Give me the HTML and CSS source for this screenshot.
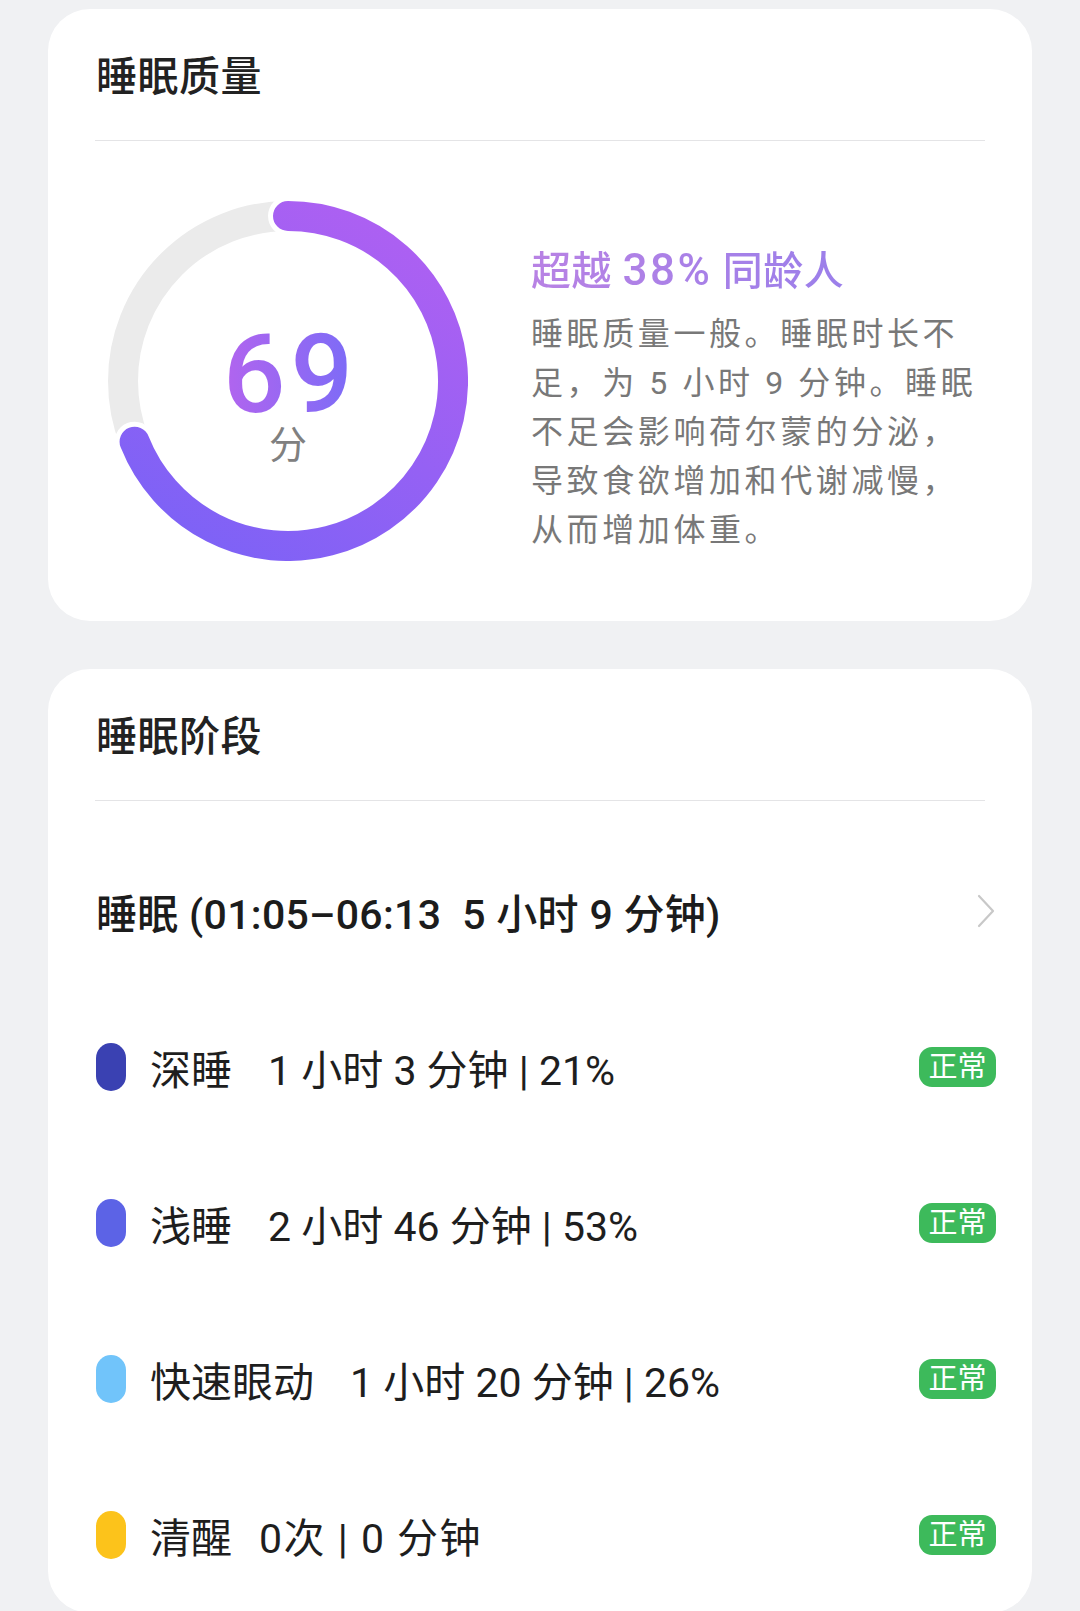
FILE: index.html
```html
<!DOCTYPE html>
<html lang="zh-CN">
<head>
<meta charset="utf-8">
<title>睡眠</title>
<link rel="stylesheet" href="styles.css">
</head>
<body>
<div class="page">
  <section class="card">
    <header class="card-head"><h2 class="card-title">睡眠质量</h2></header>
    <div class="quality">
      <div class="ring">
        <svg class="ring-svg" width="360" height="360" viewBox="0 0 360 360">
          <defs>
            <linearGradient id="arcGrad" gradientUnits="userSpaceOnUse" x1="260" y1="10" x2="60" y2="330">
              <stop offset="0" stop-color="#ad60f2"/>
              <stop offset="1" stop-color="#7d62f6"/>
            </linearGradient>
          </defs>
          <circle cx="180" cy="180" r="165" fill="none" stroke="#ebebeb" stroke-width="30"/>
          <path d="M180 15 A165 165 0 1 1 26.6 240.7" fill="none" stroke="#ffffff" stroke-width="40" stroke-linecap="round"/>
          <path d="M180 15 A165 165 0 1 1 26.6 240.7" fill="none" stroke="url(#arcGrad)" stroke-width="30" stroke-linecap="round"/>
        </svg>
        <div class="score">
          <span class="score-num">69</span>
          <span class="score-unit">分</span>
        </div>
      </div>
      <div class="quality-text">
        <div class="beat">超越 <span class="beat-num">38%</span> 同龄人</div>
        <p class="desc">睡眠质量一般。睡眠时长不<br>足，为 5 小时 9 分钟。睡眠<br>不足会影响荷尔蒙的分泌，<br>导致食欲增加和代谢减慢，<br>从而增加体重。</p>
      </div>
    </div>
  </section>

  <section class="card">
    <header class="card-head"><h2 class="card-title">睡眠阶段</h2></header>
    <div class="stages">
      <div class="row session">
        <span class="session-text">睡眠 (01:05–06:13  5 小时 9 分钟)</span>
        <svg class="chevron" width="20" height="34" viewBox="0 0 20 34"><polyline points="3,2 17,17 3,32" fill="none" stroke="#c8c8c8" stroke-width="2.2" stroke-linecap="round" stroke-linejoin="round"/></svg>
      </div>
      <div class="row stage">
        <span class="pill deep"></span>
        <span class="label">深睡</span>
        <span class="value">1 小时 3 分钟 | 21%</span>
        <span class="badge">正常</span>
      </div>
      <div class="row stage">
        <span class="pill light"></span>
        <span class="label">浅睡</span>
        <span class="value">2 小时 46 分钟 | 53%</span>
        <span class="badge">正常</span>
      </div>
      <div class="row stage">
        <span class="pill rem"></span>
        <span class="label">快速眼动</span>
        <span class="value">1 小时 20 分钟 | 26%</span>
        <span class="badge">正常</span>
      </div>
      <div class="row stage">
        <span class="pill awake"></span>
        <span class="label label-short">清醒</span>
        <span class="value">0次 | 0 分钟</span>
        <span class="badge">正常</span>
      </div>
    </div>
  </section>
</div>
</body>
</html>
```

FILE: styles.css
```css
* { box-sizing: border-box; }

html, body {
  margin: 0;
  padding: 0;
}

body {
  background: #f0f1f3;
  font-family: "Roboto", "Noto Sans CJK SC", sans-serif;
  color: #1e1e1e;
}

.page {
  display: flex;
  flex-direction: column;
  gap: 48px;
  padding: 9px 48px 0;
}

.card {
  background: #ffffff;
  border-radius: 42px;
  padding: 0 47px;
}

.card-head {
  padding: 41px 0 36px;
  border-bottom: 1px solid #e4e4e6;
}

.card-title {
  margin: 0;
  font-size: 41px;
  line-height: 54px;
  font-weight: 500;
  letter-spacing: 0.5px;
  color: #222222;
  padding-left: 1px;
}

/* quality */
.quality {
  display: flex;
  align-items: flex-start;
  padding: 60px 0;
}

.ring {
  position: relative;
  width: 360px;
  height: 360px;
  margin-left: 13px;
  flex: none;
}

.ring-svg {
  display: block;
}

.score {
  position: absolute;
  inset: 0;
  display: flex;
  flex-direction: column;
  align-items: center;
  justify-content: center;
  padding-top: 33px;
}

.score-num {
  display: block;
  font-size: 110px;
  line-height: 90px;
  font-weight: 500;
  letter-spacing: 5px;
  padding-left: 5px;
  background: linear-gradient(90deg, #b464ee 0%, #7a6cf7 100%);
  -webkit-background-clip: text;
  background-clip: text;
  color: transparent;
}

.score-unit {
  display: block;
  margin-top: 4px;
  font-size: 38px;
  line-height: 42px;
  color: #808080;
}

.quality-text {
  margin-left: 63px;
  padding-top: 45px;
}

.beat {
  font-size: 40px;
  line-height: 48px;
  font-weight: 500;
  letter-spacing: 0.5px;
  background: linear-gradient(90deg, #b882e4 0%, #9b7fea 100%);
  -webkit-background-clip: text;
  background-clip: text;
  color: transparent;
  display: inline-block;
  white-space: nowrap;
}

.beat-num {
  font-size: 44px;
  letter-spacing: 2.5px;
}

.desc {
  margin: 14px 0 0;
  font-size: 32px;
  line-height: 49px;
  letter-spacing: 3.6px;
  color: #787878;
  white-space: nowrap;
}

/* stages */
.stages {
  padding-top: 32px;
  margin-right: -11px;
}

.row {
  height: 156px;
  display: flex;
  align-items: center;
}

.session {
  justify-content: space-between;
}

.session-text {
  font-size: 41px;
  font-weight: 500;
  letter-spacing: 0.3px;
  white-space: pre;
  color: #1c1c1c;
  padding-left: 1px;
}

.chevron {
  display: block;
}

.pill {
  width: 30px;
  height: 48px;
  border-radius: 15px;
  flex: none;
  margin-left: 1px;
}
.deep { background: #3a41b2; }
.light { background: #5c63e6; }
.rem { background: #71c4fa; }
.awake { background: #fcc31b; }

.label {
  font-size: 41px;
  margin-left: 24px;
  color: #1e1e1e;
}

.value {
  font-size: 41px;
  margin-left: 36px;
  white-space: pre;
  color: #1e1e1e;
}

.label-short + .value {
  margin-left: 27px;
  letter-spacing: 1.5px;
}

.badge {
  margin-left: auto;
  width: 77px;
  height: 40px;
  border-radius: 13px;
  background: #3dba5b;
  color: #ffffff;
  font-size: 29px;
  line-height: 40px;
  text-align: center;
}
```
